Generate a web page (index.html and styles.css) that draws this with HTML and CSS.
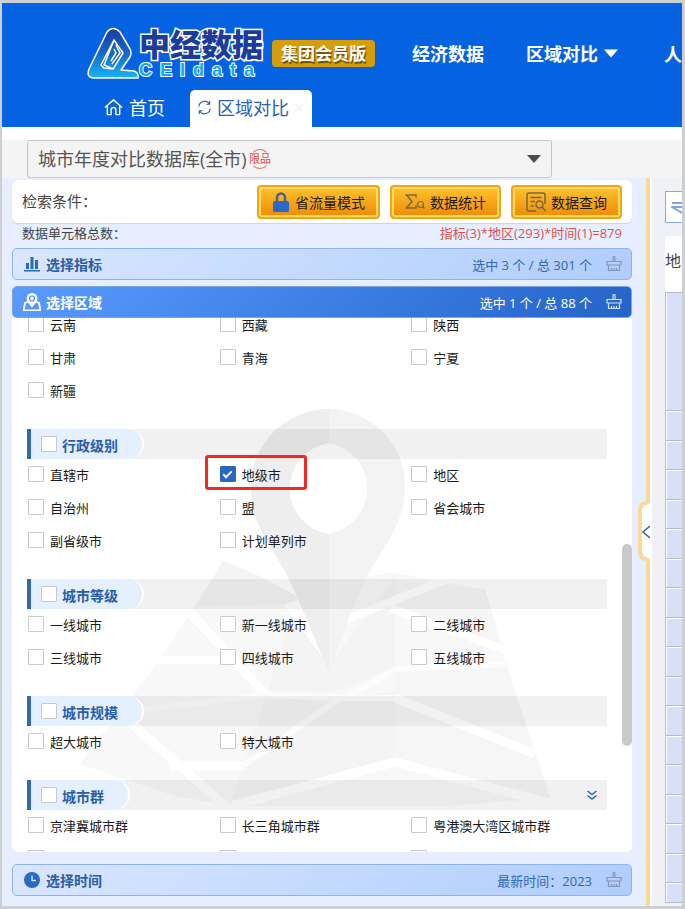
FILE: index.html
```html
<!DOCTYPE html>
<html lang="zh-CN">
  <head>
    <meta charset="UTF-8" />
    <meta name="viewport" content="width=device-width, initial-scale=1.0" />
    <title>中经数据 - 区域对比</title>
    <link rel="stylesheet" href="styles.css">
  </head>
  <body>
    <svg class="defs" width="0" height="0" aria-hidden="true">
      <symbol id="brush" viewBox="0 0 16 16">
        <path d="M7 5.500V1.500a1 1 0 0 1 2 0v4M1 9V5.500h14V9zM2.500 9v5.500h11V9M5.500 14.500V12M8 14.500V12M10.500 14.500V12" fill="none" stroke="currentColor" stroke-width="1.200" />
      </symbol>
    </svg>

    <div class="app">
      <header class="header">
        <div class="header-top">
          <a class="logo" href="#" aria-label="中经数据">
            <svg class="logo-mark" viewBox="0 0 52 52">
              <defs>
                <linearGradient id="markFill" x1="0" y1="0" x2="0" y2="1">
                  <stop offset="0" stop-color="#1c3aa0" />
                  <stop offset="0.5" stop-color="#1768c8" />
                  <stop offset="1" stop-color="#19b4f4" />
                </linearGradient>
              </defs>
              <path d="M20 5q6-7 13 0L43 22q2 4 0 8l-9 13 13 1q5 2 4 7H6q-7-1-4-9z" fill="url(#markFill)" stroke="#fff" stroke-width="1.500" stroke-linejoin="round" />
              <path d="M27 13l9 13-10 16-9-1-3-3zM27 13L17 38l9 4" fill="#1768c8" stroke="#fff" stroke-width="1.500" stroke-linejoin="round" />
              <path d="M29 18l4 8-8 11M27 22l2 4-5 8" fill="none" stroke="#fff" stroke-width="1.500" />
            </svg>
            <span class="logo-text">
              <span class="logo-cn">中经数据</span>
              <span class="logo-en">CEIdata</span>
            </span>
          </a>
          <span class="edition">集团会员版</span>
          <nav class="nav">
            <a href="#">经济数据</a>
            <a href="#">区域对比 <svg class="nav-caret" viewBox="0 0 14 8"><path d="M0 0h14L7 8z" fill="#fff" /></svg></a>
            <a href="#">人</a>
          </nav>
        </div>
        <div class="tabs">
          <a class="tab" href="#">
            <svg class="tab-home" viewBox="0 0 20 18"><path d="M1 9.500L10 1.500l9 8M3.500 8v9h4v-5a2.500 2.500 0 0 1 5 0v5h4V8" fill="none" stroke="#fff" stroke-width="1.500" stroke-linejoin="round" /></svg>
            首页
          </a>
          <a class="tab active" href="#">
            <svg class="tab-sync" viewBox="0 0 16 16"><path d="M2 7a6 6 0 0 1 11-3M14 9a6 6 0 0 1-11 3M13.500 1v3.500H10M2.500 15v-3.500H6" fill="none" stroke="#2a61b5" stroke-width="1.200" /></svg>
            区域对比
            <span class="tab-close">×</span>
          </a>
        </div>
      </header>

      <div class="database-bar">
        <div class="database">
          <select class="database-select" aria-label="数据库">
            <option>城市年度对比数据库(全市)</option>
          </select>
          <span class="limited">限品</span>
          <svg class="database-caret" viewBox="0 0 14 8"><path d="M0 0h14L7 8z" fill="#4d4d4d" /></svg>
        </div>
      </div>

      <main class="main">
        <section class="filters">
          <div class="search-card">
            <span class="search-label">检索条件：</span>
            <button class="gold-button">
              <svg class="icon-lock" viewBox="0 0 18 20"><path d="M5 10V5.500a4 4 0 0 1 8 0V10" fill="none" stroke="#4c6284" stroke-width="2.500" /><rect x="1" y="9" width="16" height="11" rx="1.500" fill="#2a69cc" /></svg>
              省流量模式
            </button>
            <button class="gold-button">
              <svg class="icon-sum" viewBox="0 0 20 18"><path d="M11 4.500V2H1.500l5.500 6.500-5.500 6.500H11v-2.500" fill="none" stroke="#756848" stroke-width="1.500" /><circle cx="15.500" cy="11.500" r="3" fill="none" stroke="#756848" stroke-width="1.200" /><path d="M17.500 13.500l2 2" stroke="#756848" stroke-width="1.200" /></svg>
              数据统计
            </button>
            <button class="gold-button">
              <svg class="icon-query" viewBox="0 0 20 20"><path d="M10 19H3a2 2 0 0 1-2-2V3a2 2 0 0 1 2-2h14a2 2 0 0 1 2 2v9M4.500 5.500h11M4.500 9.500H9M4.500 14H8" fill="none" stroke="#756848" stroke-width="1.500" /><circle cx="13.500" cy="12.500" r="3.500" fill="none" stroke="#756848" stroke-width="1.500" /><path d="M16 15l4 4.500" stroke="#756848" stroke-width="1.500" /></svg>
              数据查询
            </button>
          </div>

          <div class="total">
            <span>数据单元格总数：</span>
            <span class="total-value">指标(3)*地区(293)*时间(1)=879</span>
          </div>

          <div class="bar">
            <svg class="bar-icon" viewBox="0 0 16 16"><path d="M0 14h16v1.500H0zM2 7h3v6H2zM6.500 1h3v12h-3zM11 4h3v9h-3z" fill="#2a69c4" /></svg>
            <h2>选择指标</h2>
            <span class="bar-count">选中 3 个 / 总 301 个</span>
            <button class="clear" aria-label="清空指标"><svg><use href="#brush" /></svg></button>
          </div>

          <div class="bar bar-active">
            <svg class="bar-icon bar-icon-map" viewBox="0 0 18 18"><path d="M4.500 9L2 10 0.500 17.500h17L16 10l-2.500-1" fill="none" stroke="#fff" stroke-width="1.800" /><path d="M9 0a5.500 5.500 0 0 1 5.500 5.500C14.500 9 9 14.500 9 14.500S3.500 9 3.500 5.500A5.500 5.500 0 0 1 9 0z" fill="#fff" /><circle cx="9" cy="5.500" r="2.500" fill="none" stroke="#4b8cf0" stroke-width="1.200" /></svg>
            <h2>选择区域</h2>
            <span class="bar-count">选中 1 个 / 总 88 个</span>
            <button class="clear" aria-label="清空区域"><svg><use href="#brush" /></svg></button>
          </div>

          <div class="region-list">
            <svg class="watermark" viewBox="12 318 620 534" aria-hidden="true">
              <path d="M223 561l42 17 64 90 36-90 25-6 95 17 19 68 46 141-100 8H235l-60-10-95-32 75-98 33-49z" fill="#f8f8f8" />
              <path d="M223 561l40 17 40 21-18 5-90 3zM268 690l22-75 39 50 46-60 20-28v90l-60 25zM232 800l35-105 70 5 58-8v68z" fill="#f4f4f4" />
              <path d="M395 668l110-5 45 135-155-38zM395 580l90 9 16 55-106-35z" fill="#f6f6f6" />
              <g fill="none" stroke="#fff" stroke-width="9">
                <path d="M184 606l82 89" />
                <path d="M150 660h70M390 608l116 42M345 620l105-42" stroke-width="8" />
                <path d="M395 698l140 56M170 766h75M130 722l100 88M232 806l163-44 158 42" />
              </g>
              <path d="M266 695l80 3 50-29 112-5M240 768l100-70 55 0M140 710l125-15" fill="none" stroke="#fcfcfc" stroke-width="6" />
              <path d="M329 409a78 78 0 0 0-78 78c0 40 22 60 38 92 14 30 26 60 40 94 12-34 22-62 36-92 15-32 40-54 40-94a77 77 0 0 0-76-78zm-1 34a46 46 0 0 1 0 91 46 46 0 0 1 0-91z" fill="#f3f3f3" fill-rule="evenodd" />
              <path d="M329 409a78 78 0 0 0-78 78c0 40 22 60 38 92 14 30 26 60 40 94V534a46 46 0 0 1 0-91z" fill="#eee" />
            </svg>

            <div class="region-scroll">
              <div class="options options-first">
                <label class="option"><input type="checkbox">云南</label>
                <label class="option"><input type="checkbox">西藏</label>
                <label class="option"><input type="checkbox">陕西</label>
                <label class="option"><input type="checkbox">甘肃</label>
                <label class="option"><input type="checkbox">青海</label>
                <label class="option"><input type="checkbox">宁夏</label>
                <label class="option"><input type="checkbox">新疆</label>
              </div>

              <div class="group">
                <label class="group-title"><input type="checkbox">行政级别</label>
              </div>
              <div class="options">
                <label class="option"><input type="checkbox">直辖市</label>
                <label class="option marked"><input type="checkbox" checked>地级市</label>
                <label class="option"><input type="checkbox">地区</label>
                <label class="option"><input type="checkbox">自治州</label>
                <label class="option"><input type="checkbox">盟</label>
                <label class="option"><input type="checkbox">省会城市</label>
                <label class="option"><input type="checkbox">副省级市</label>
                <label class="option"><input type="checkbox">计划单列市</label>
              </div>

              <div class="group">
                <label class="group-title"><input type="checkbox">城市等级</label>
              </div>
              <div class="options">
                <label class="option"><input type="checkbox">一线城市</label>
                <label class="option"><input type="checkbox">新一线城市</label>
                <label class="option"><input type="checkbox">二线城市</label>
                <label class="option"><input type="checkbox">三线城市</label>
                <label class="option"><input type="checkbox">四线城市</label>
                <label class="option"><input type="checkbox">五线城市</label>
              </div>

              <div class="group">
                <label class="group-title"><input type="checkbox">城市规模</label>
              </div>
              <div class="options">
                <label class="option"><input type="checkbox">超大城市</label>
                <label class="option"><input type="checkbox">特大城市</label>
              </div>

              <div class="group">
                <label class="group-title"><input type="checkbox">城市群</label>
                <button class="expand" aria-label="展开"><svg viewBox="0 0 10 10"><path d="M0.500 1L5 4.500 9.500 1M0.500 5.500L5 9l4.500-3.500" fill="none" stroke="#2f66b8" stroke-width="1.500" /></svg></button>
              </div>
              <div class="options">
                <label class="option"><input type="checkbox">京津冀城市群</label>
                <label class="option"><input type="checkbox">长三角城市群</label>
                <label class="option"><input type="checkbox">粤港澳大湾区城市群</label>
                <label class="option"><input type="checkbox">成渝城市群</label>
                <label class="option"><input type="checkbox" aria-label="中原城市群"></label>
                <label class="option"><input type="checkbox" aria-label="关中城市群"></label>
              </div>
            </div>
            <div class="scroll-thumb"></div>
          </div>

          <div class="bar bar-time">
            <svg class="bar-icon" viewBox="0 0 16 16"><circle cx="8" cy="8" r="8" fill="#2a69c4" /><path d="M8 3.500V8.500h4" fill="none" stroke="#cfe0fb" stroke-width="1.500" /></svg>
            <h2>选择时间</h2>
            <span class="bar-count">最新时间：2023</span>
            <button class="clear" aria-label="清空时间"><svg><use href="#brush" /></svg></button>
          </div>

          <button class="collapse" aria-label="收起">
            <svg viewBox="0 0 12 64"><path d="M12 0Q9 4 4 5 1 7 1 12V52Q1 57 4 59 9 60 12 64z" fill="#fff" /><path d="M12 1Q9 4 5 5 2 7 2 12V52Q2 57 5 59 9 60 12 63" fill="none" stroke="#fbd896" stroke-width="4" /><path d="M12 27L5 33l7 6" fill="none" stroke="#2f5fae" stroke-width="1.500" /></svg>
          </button>
        </section>

        <section class="result">
          <button class="swap" aria-label="行列转换"><svg viewBox="0 0 24 16"><path d="M24 4H1M24 8H1l10 6" fill="none" stroke="#7fa3e0" stroke-width="2" /></svg></button>
          <div class="result-title">地</div>
          <div class="result-table">
            <table>
              <thead><tr><th></th></tr></thead>
              <tbody>
                <tr><td></td></tr><tr><td></td></tr><tr><td></td></tr>
                <tr><td></td></tr><tr><td></td></tr><tr><td></td></tr>
                <tr><td></td></tr><tr><td></td></tr><tr><td></td></tr>
                <tr><td></td></tr><tr><td></td></tr><tr><td></td></tr>
                <tr><td></td></tr><tr><td></td></tr><tr><td></td></tr>
                <tr><td></td></tr><tr><td></td></tr>
              </tbody>
            </table>
          </div>
        </section>
      </main>
    </div>
  </body>
</html>
```

FILE: styles.css
```css
*,
*::before,
*::after {
  box-sizing: border-box;
}
body {
  margin: 0;
  padding: 3px 3px 3px 2px;
  height: 100vh;
  background: #cdd0d3;
  font-family: "Open Sans", "Noto Sans CJK SC", sans-serif;
  font-size: 13px;
  color: #1a1a1a;
}
a {
  color: inherit;
  text-decoration: none;
}
button {
  font-family: inherit;
  padding: 0;
  border: 0;
  background: none;
}
svg {
  display: block;
  flex: none;
}
.defs {
  position: absolute;
}
.app {
  height: 100%;
  display: flex;
  flex-direction: column;
  background: #fff;
  overflow: hidden;
}

/* header */
.header {
  flex: none;
  height: 124px;
  display: flex;
  flex-direction: column;
  justify-content: space-between;
  background: #0563e2;
  color: #fff;
}
.header-top {
  display: flex;
  align-items: center;
  height: 76px;
  padding: 24px 0 0 85px;
  white-space: nowrap;
}
.logo {
  display: flex;
}
.logo-mark {
  width: 52px;
  height: 52px;
}
.logo-text {
  display: flex;
  flex-direction: column;
  width: 124px;
  font-weight: 900;
  paint-order: stroke fill;
}
.logo-cn {
  font-size: 31px;
  line-height: 34px;
  color: #1d3b9b;
  -webkit-text-stroke: 3px #fff;
}
.logo-en {
  font-family: "Liberation Sans", Arial, sans-serif;
  font-size: 18px;
  line-height: 18px;
  letter-spacing: 8px;
  color: #1ba5ee;
  -webkit-text-stroke: 2px #fff;
}
.edition {
  margin-left: 9px;
  padding: 0 9px;
  line-height: 27px;
  border-radius: 4px;
  background: #d59c0b;
  font-size: 17px;
  font-weight: bold;
  text-shadow: 1px 2px 1px #6b4a00;
}
.nav {
  display: flex;
  gap: 42px;
  margin-left: 37px;
  font-size: 18px;
  font-weight: bold;
}
.nav a {
  display: flex;
  align-items: center;
  gap: 6px;
}
.nav a:last-child {
  margin-left: 4px;
}
.nav-caret {
  width: 14px;
  height: 9px;
}
.tabs {
  display: flex;
  height: 37px;
  padding-left: 102px;
  font-size: 18px;
}
.tab {
  display: flex;
  align-items: center;
  gap: 6px;
  padding: 0 25px 3px 0;
}
.tab.active {
  gap: 5px;
  padding: 0 8px 3px 7px;
  border-radius: 5px 5px 0 0;
  background: #fff;
  color: #2a61b5;
}
.tab-home {
  width: 19px;
  height: 18px;
}
.tab-sync {
  width: 15px;
  height: 15px;
}
.tab-close {
  color: #eef2f6;
}

/* database select */
.database-bar {
  flex: none;
  margin-top: 13px;
  padding: 0 130px 0 25px;
  background: #f4f4f4;
}
.database {
  position: relative;
}
.database-select {
  display: block;
  width: 100%;
  height: 38px;
  padding: 0 10px;
  border: 1px solid #c3c7cb;
  border-radius: 3px;
  background: #f4f4f4;
  appearance: none;
  font-family: inherit;
  font-size: 18px;
  color: #555;
}
.limited {
  position: absolute;
  left: 222px;
  top: 9px;
  font-size: 11px;
  line-height: 19px;
  color: #dc4c3c;
}
.limited::before {
  content: "";
  position: absolute;
  left: 1px;
  top: 0;
  width: 20px;
  height: 20px;
  border: 1px solid transparent;
  border-top-color: #e0705f;
  border-bottom-color: #e0705f;
  border-radius: 50%;
}
.database-caret {
  position: absolute;
  right: 11px;
  top: 15px;
  width: 14px;
  height: 8px;
}

/* filters */
.main {
  flex: 1;
  min-height: 0;
  display: flex;
}
.filters {
  position: relative;
  flex: 1;
  min-width: 0;
  display: flex;
  flex-direction: column;
  padding: 2px 14px 10px 10px;
  border-right: 4px solid #fbd896;
  background: #e6eeff;
}
.search-card {
  flex: none;
  display: flex;
  align-items: center;
  gap: 10px;
  height: 43px;
  padding: 0 10px;
  border-radius: 6px;
  background: #fff;
  box-shadow: 0 1px 1px #cbd3e2;
}
.search-label {
  flex: 1;
  padding-bottom: 3px;
  font-size: 15px;
  color: #444;
}
.gold-button {
  display: flex;
  align-items: center;
  gap: 5px;
  height: 34px;
  padding: 0 13px;
  border: 2px solid #eea71c;
  border-radius: 4px;
  background: linear-gradient(#fdc32e, #ef8a06);
  box-shadow: inset 0 0 0 2px #ffdb5c;
  font-size: 14px;
  color: #1f1a10;
}
.icon-lock {
  width: 18px;
  height: 20px;
}
.icon-sum {
  width: 20px;
  height: 18px;
}
.icon-query {
  width: 20px;
  height: 20px;
}
.total {
  flex: none;
  display: flex;
  justify-content: space-between;
  height: 25px;
  padding: 0 10px;
  line-height: 20px;
  color: #444;
}
.total-value {
  color: #d9534f;
}
.bar {
  flex: none;
  display: flex;
  align-items: center;
  height: 32px;
  padding: 0 9px 0 11px;
  border: 1px solid #8fb3e6;
  border-radius: 5px;
  background: linear-gradient(135deg, #d9e7ff, #afcdfc);
  color: #3467b0;
}
.bar h2 {
  flex: 1;
  margin: 0 0 0 6px;
  font-size: 14px;
  color: #2a5ca8;
}
.bar-icon {
  width: 16px;
  height: 16px;
}
.bar-active {
  margin-top: 6px;
  padding-left: 10px;
  border-color: #7ba5e6;
  background: linear-gradient(135deg, #5a9bff, #2463c8);
  color: #fff;
}
.bar-active h2 {
  margin-left: 5px;
  color: #fff;
}
.bar-icon-map {
  width: 18px;
  height: 18px;
}
.bar-time {
  margin-top: 12px;
}
.clear {
  margin-left: 14px;
  color: #8597b8;
}
.bar-active .clear {
  color: #cfe3ff;
}
.clear svg {
  width: 16px;
  height: 16px;
}

/* region list */
.region-list {
  position: relative;
  flex: 1;
  min-height: 0;
  overflow: hidden;
  border-radius: 0 0 6px 6px;
  background: #fff;
}
.watermark {
  position: absolute;
  left: 0;
  top: 0;
  width: 100%;
  height: 100%;
}
.region-scroll {
  position: relative;
  padding: 0 25px 0 15px;
}
.options {
  display: grid;
  grid-template-columns: repeat(3, 1fr);
  grid-auto-rows: 33px;
  margin-bottom: 21px;
  padding: 0 4px 0 1px;
}
/* first rows are scrolled partly under the bar */
.options-first {
  margin-top: -9px;
}
.option {
  position: relative;
  display: flex;
  align-items: center;
  gap: 6px;
  padding-bottom: 2px;
}
input[type="checkbox"] {
  flex: none;
  width: 16px;
  height: 16px;
  margin: 0 0 1px;
  border: 1px solid #c9c9c9;
  border-radius: 1px;
  background: #fff;
  appearance: none;
}
input[type="checkbox"]:checked {
  display: grid;
  place-items: center;
  border-color: #2a66c4;
  background: #2a66c4;
}
input[type="checkbox"]:checked::after {
  content: "";
  width: 9px;
  height: 5px;
  margin-bottom: 2px;
  border: solid #fff;
  border-width: 0 0 2px 2px;
  transform: rotate(-45deg);
}
.marked::before {
  content: "";
  position: absolute;
  left: -15px;
  top: -4px;
  width: 102px;
  height: 35px;
  border: 3px solid #ee2a24;
  border-radius: 3px;
}
.group {
  display: flex;
  align-items: center;
  justify-content: space-between;
  height: 30px;
  padding-right: 10px;
  border-left: 4px solid #3468b4;
  background: rgba(0, 0, 0, 0.055);
}
.group-title {
  display: flex;
  align-items: center;
  gap: 5px;
  height: 30px;
  padding: 1px 24px 0 10px;
  border-right: 2px solid #fff;
  border-radius: 0 15px 15px 0;
  background: #e5f0ff;
  font-size: 14px;
  font-weight: bold;
  color: #2a5ca8;
}
.expand svg {
  width: 10px;
  height: 10px;
}
.scroll-thumb {
  position: absolute;
  right: 0;
  top: 226px;
  width: 10px;
  height: 202px;
  border-radius: 5px;
  background: #c9c9c9;
}
.collapse {
  position: absolute;
  right: -4px;
  top: 321px;
}
.collapse svg {
  width: 12px;
  height: 64px;
}

/* result table */
.result {
  flex: none;
  width: 30px;
  display: flex;
  flex-direction: column;
  margin-left: 2px;
  padding: 13px 0 3px 13px;
  background: #eff1f6;
  overflow: hidden;
}
.swap {
  flex: none;
  width: 40px;
  height: 32px;
  padding-left: 5px;
  border: 1px solid #86aae6;
  background: #fff;
}
.swap svg {
  width: 24px;
  height: 16px;
}
.result-title {
  flex: none;
  height: 56px;
  margin-top: 13px;
  background: #fff;
  font-size: 16px;
  line-height: 50px;
  color: #444;
  white-space: nowrap;
}
.result-table {
  flex: 1;
  min-height: 0;
  overflow: hidden;
  border-bottom: 1px solid #b5bccb;
}
table {
  width: 60px;
  border-collapse: separate;
  border-spacing: 0;
}
th,
td {
  height: 29px;
  padding: 0;
  border: 1px solid #fff;
  border-left-color: #b5bccb;
  border-bottom-color: #b5bccb;
  background: #d9dff6;
  box-shadow: inset 1px 0 #fff;
}
th {
  height: 119px;
  border-top-color: #b5bccb;
}
tr:nth-child(odd) td {
  height: 30px;
}
```
